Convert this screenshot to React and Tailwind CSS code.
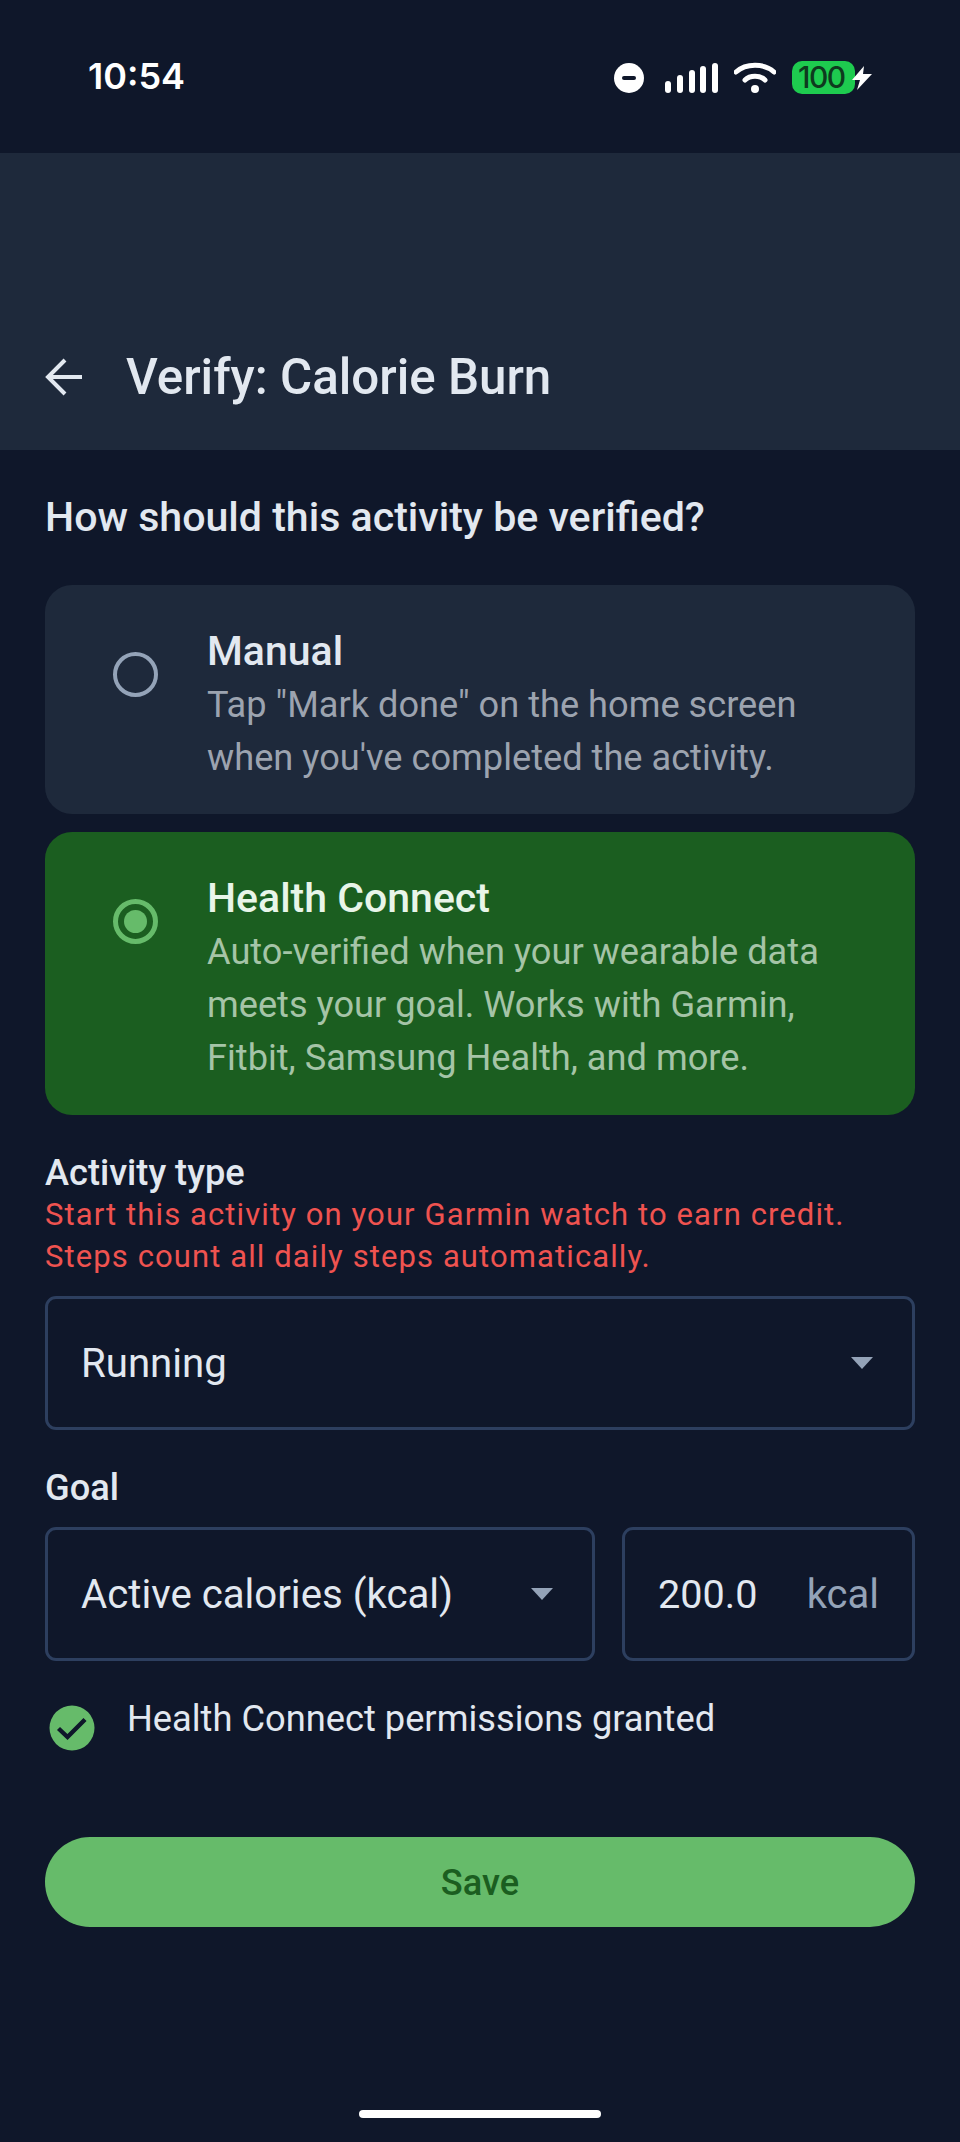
import React from 'react';

function StatusBar() {
    return (
        <div className="h-[153px] flex items-start justify-between pl-[88px] pr-[87px] pt-[54px] bg-[#0f172a]">
            <span className="text-[36px] leading-[44px] font-semibold text-white font-['Inter',sans-serif]">10:54</span>
            <div className="flex items-center pt-[7px]">
                {/* do not disturb */}
                <svg width="30" height="30" viewBox="0 0 30 30">
                    <circle cx="15" cy="15" r="15" fill="#fff" />
                    <rect x="8" y="13" width="14" height="4" rx="2" fill="#0f172a" />
                </svg>
                {/* signal */}
                <svg width="53" height="30" viewBox="0 0 53 30" className="ml-[21px]">
                    <rect x="0" y="18" width="6" height="12" rx="3" fill="#fff" />
                    <rect x="12" y="12" width="6" height="18" rx="3" fill="#fff" />
                    <rect x="24" y="7" width="6" height="23" rx="3" fill="#fff" />
                    <rect x="35" y="3" width="6" height="27" rx="3" fill="#fff" />
                    <rect x="47" y="0" width="6" height="30" rx="3" fill="#fff" />
                </svg>
                {/* wifi */}
                <svg width="42" height="31" viewBox="0 0 42 31" fill="none" className="ml-[16px]">
                    <path d="M2 10 C12 1 30 1 40 10" stroke="#fff" strokeWidth="5" strokeLinecap="round" />
                    <path d="M11 18 C16 13 26 13 31 18" stroke="#fff" strokeWidth="5" strokeLinecap="round" />
                    <circle cx="21" cy="27" r="4" fill="#fff" />
                </svg>
                <div className="ml-[16px] flex items-center">
                    <div className="w-[63px] h-[33px] rounded-[10px] bg-[#1ecb4f] text-[#0e3a1e] text-[30px] leading-[33px] font-medium pl-[6px] whitespace-nowrap font-['Inter',sans-serif] tracking-[-1.5px]">100</div>
                    <svg width="22" height="24" viewBox="0 0 22 24" className="-ml-[4px] relative">
                        <path d="M13 0 L1 14 H9 L6 24 L21 8 H12 Z" fill="#fff" />
                    </svg>
                </div>
            </div>
        </div>
    );
}

function Radio({ selected }) {
    if (selected) {
        return (
            <div className="mt-[27px] w-[45px] h-[45px] rounded-full border-[5px] border-[#66bb6a] flex items-center justify-center shrink-0">
                <div className="w-[23px] h-[23px] rounded-full bg-[#66bb6a]"></div>
            </div>
        );
    }
    return <div className="mt-[27px] w-[45px] h-[45px] rounded-full border-[4px] border-[#94a3b8] shrink-0"></div>;
}

function OptionCard({ title, lines, selected }) {
    return (
        <div className={`rounded-[27px] flex items-start pl-[68px] pr-[30px] pt-[40px] ${selected ? 'pb-[31px] bg-[#1b5e20]' : 'pb-[30px] bg-[#1e293b]'}`}>
            <Radio selected={selected} />
            <div className="pl-[49px]">
                <div className={`text-[41px] leading-[53px] font-medium ${selected ? 'text-[#e8f5e9]' : 'text-[#e2e8f0]'}`}>{title}</div>
                {lines.map((l) => (
                    <div key={l} className={`text-[36.2px] leading-[53px] ${selected ? 'text-[#a5c4a7]' : 'text-[#9ca3af]'}`}>{l}</div>
                ))}
            </div>
        </div>
    );
}

function Caret() {
    return (
        <svg width="24" height="12" viewBox="0 0 24 12" className="shrink-0">
            <path d="M1 0 H23 L12 12 Z" fill="#94a3b8" />
        </svg>
    );
}

function Select({ value, className }) {
    return (
        <div className={`h-[134px] border-[3px] border-[#2d3f5f] rounded-[11px] flex items-center justify-between pl-[33px] pr-[38px] ${className}`}>
            <span className="pt-[2px] text-[40.2px] text-[#e2e8f0]">{value}</span>
            <Caret />
        </div>
    );
}

export default function App() {
    return (
        <div className="w-[960px] h-[2142px] bg-[#0f172a] overflow-hidden font-['Roboto',sans-serif] flex flex-col">
            <StatusBar />
            <header className="h-[297px] bg-[#1e293b] flex items-end px-[45px] pb-[43px]">
                <svg width="38" height="38" viewBox="0 0 38 38" fill="none" className="mb-[11px] shrink-0">
                    <path d="M37 19 H3 M20 2 L3 19 L20 36" stroke="#e2e8f0" strokeWidth="4" />
                </svg>
                <h1 className="ml-[43px] text-[49.3px] leading-[60px] font-medium text-[#e2e8f0]">Verify: Calorie Burn</h1>
            </header>

            <main className="px-[45px] flex flex-col">
                <p className="mt-[41px] text-[41.1px] leading-[52px] font-medium text-[#e2e8f0]">How should this activity be verified?</p>

                <div className="mt-[42px] flex flex-col gap-[18px]">
                    <OptionCard title="Manual" lines={['Tap "Mark done" on the home screen', "when you've completed the activity."]} />
                    <OptionCard selected title="Health Connect" lines={['Auto-verified when your wearable data', 'meets your goal. Works with Garmin,', 'Fitbit, Samsung Health, and more.']} />
                </div>

                <div className="mt-[38px] text-[36.2px] leading-[40px] font-medium text-[#e2e8f0]">Activity type</div>
                <div className="mt-[1px] text-[31px] leading-[41.5px] tracking-[1.1px] text-[#ef5350]">
                    <div>Start this activity on your Garmin watch to earn credit.</div>
                    <div>Steps count all daily steps automatically.</div>
                </div>

                <Select value="Running" className="mt-[19px]" />

                <div className="mt-[38px] text-[36.2px] leading-[40px] font-medium text-[#e2e8f0]">Goal</div>

                <div className="mt-[19px] flex gap-[27px]">
                    <Select value="Active calories (kcal)" className="w-[550px]" />
                    <div className="flex-1 h-[134px] border-[3px] border-[#2d3f5f] rounded-[11px] flex items-center justify-between pl-[33px] pr-[33px]">
                        <span className="pt-[2px] text-[39.6px] text-[#e2e8f0]">200.0</span>
                        <span className="pt-[2px] text-[40px] text-[#94a3b8]">kcal</span>
                    </div>
                </div>

                <div className="mt-[36px] flex items-start">
                    <svg width="46" height="46" viewBox="0 0 46 46" className="ml-[4px] mt-[8px] shrink-0">
                        <circle cx="23" cy="23" r="22.5" fill="#66bb6a" />
                        <path d="M9.5 23.5 L18.5 32 L36 14.5" fill="none" stroke="#0f172a" strokeWidth="4.4" />
                    </svg>
                    <span className="ml-[32px] text-[36.25px] leading-[44px] text-[#e2e8f0]">Health Connect permissions granted</span>
                </div>

                <button className="mt-[86px] h-[90px] pt-[2px] rounded-full bg-[#66bb6a] text-[#1b5e20] text-[36.2px] font-medium">Save</button>
            </main>

            <div className="mt-auto mb-[24px] self-center w-[242px] h-[8px] rounded-full bg-white"></div>
        </div>
    );
}
